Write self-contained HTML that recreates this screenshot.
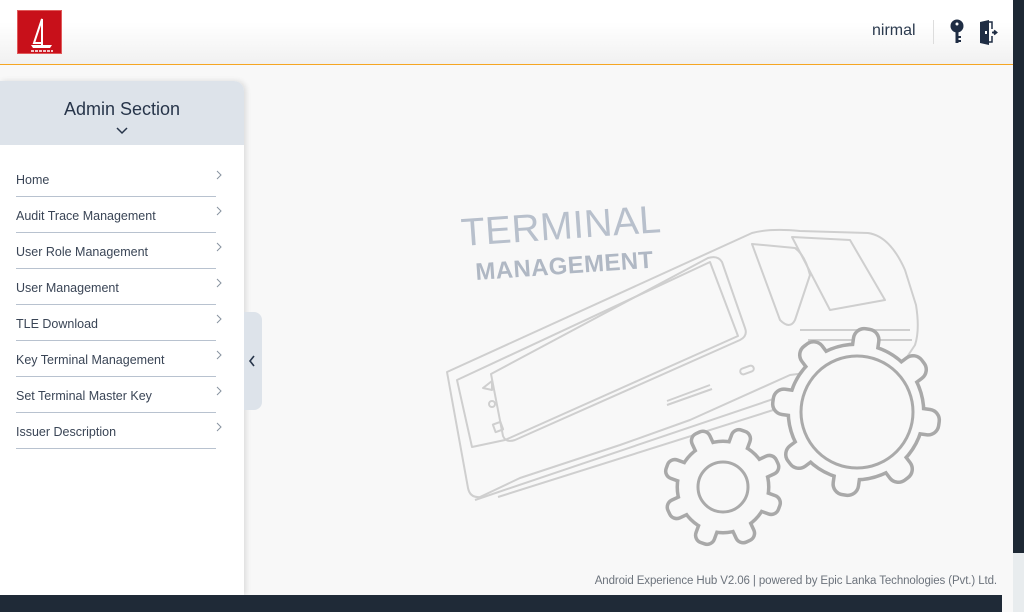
<!DOCTYPE html>
<html><head><meta charset="utf-8"><style>
*{margin:0;padding:0;box-sizing:border-box}
body{width:1024px;height:612px;overflow:hidden;background:#f8f8f8;font-family:"Liberation Sans",sans-serif;position:relative}
.hdr{position:absolute;left:0;top:0;width:1013px;height:65px;background:linear-gradient(#fff 0%,#fff 35%,#f1f1f1 100%);border-bottom:1px solid #f5a623}
.logo{position:absolute;left:17px;top:10px;width:45px;height:44px;background:#c8101a;border:1px solid #e05a5a}
.user{position:absolute;left:872px;top:22px;font-size:16px;color:#2b3a4e}
.sep{position:absolute;left:933px;top:20px;width:1px;height:24px;background:#ddd}
.rstrip{position:absolute;left:1013px;top:0;width:11px;height:553px;background:#1d2834}
.rstrip2{position:absolute;left:1013px;top:553px;width:11px;height:59px;background:#e8ecee}
.foot{position:absolute;left:0;top:595px;width:1002px;height:17px;background:#1f2a37}
.side{position:absolute;left:0;top:81px;width:244px;height:514px;background:#fff;box-shadow:2px 0 6px rgba(0,0,0,.12);border-top-right-radius:10px}
.sh{height:64px;background:#dde3ea;border-top-right-radius:10px;text-align:center;color:#27354a;font-size:18px;padding-top:18px}
.item{position:absolute;left:16px;width:200px;height:36px;border-bottom:1px solid #b8c2cf;font-size:12.5px;color:#3a4556}
.item span{position:absolute;left:0;bottom:9px}
.item i{position:absolute;right:-6px;bottom:13px}
.tab{position:absolute;left:244px;top:312px;width:18px;height:98px;background:#dde3ea;border-radius:0 8px 8px 0}
.ft{position:absolute;right:27px;top:575px;font-size:11.5px;color:#6c737c;letter-spacing:-0.1px}
</style></head><body>
<div class="hdr">
 <div class="logo"><svg width="45" height="44" viewBox="0 0 45 44"><path d="M24 8 L16 32 L24 32 Z" fill="none" stroke="#fff" stroke-width="2"/><path d="M24 8 V34" stroke="#fff" stroke-width="2"/><path d="M13 34 H34 L32 37 H15 Z" fill="#fff"/><path d="M13 40 h22" stroke="#fff" stroke-width="1.5" stroke-dasharray="3 1"/></svg></div>
 <div class="user">nirmal</div><div class="sep"></div>
 <svg style="position:absolute;left:948px;top:19px" width="18" height="26" viewBox="0 0 18 26"><circle cx="9" cy="7" r="6.5" fill="#1f2d44"/><circle cx="9" cy="5" r="1.5" fill="#fff"/><rect x="7.5" y="11" width="3" height="13" fill="#1f2d44"/><rect x="10" y="17" width="3" height="2" fill="#1f2d44"/><rect x="10" y="21" width="3" height="2" fill="#1f2d44"/></svg>
 <svg style="position:absolute;left:979px;top:20px" width="20" height="25" viewBox="0 0 20 25"><path d="M1 2 L10 0 V25 L1 23 Z" fill="#1f2d44"/><path d="M10 2 H13 V9 M13 16 V22 H10" fill="none" stroke="#1f2d44" stroke-width="1.5"/><rect x="6" y="11" width="2" height="3" fill="#fff"/><path d="M13 12.5 H17 M15 10.5 L17.5 12.5 L15 14.5" stroke="#1f2d44" stroke-width="1.8" fill="none"/></svg>
</div>
<div class="rstrip"></div><div class="rstrip2"></div>
<div class="side">
 <div class="sh">Admin Section<br><svg width="14" height="10" viewBox="0 0 14 10" style="margin-top:4px"><path d="M2 2 L7 7 L12 2" fill="none" stroke="#27354a" stroke-width="1.5"/></svg></div>
 <div class="item" style="top:80px"><span>Home</span><i><svg width="6" height="10"><path d="M1 1 L5 5 L1 9" fill="none" stroke="#8893a0"/></svg></i></div>
 <div class="item" style="top:116px"><span>Audit Trace Management</span><i><svg width="6" height="10"><path d="M1 1 L5 5 L1 9" fill="none" stroke="#8893a0"/></svg></i></div>
 <div class="item" style="top:152px"><span>User Role Management</span><i><svg width="6" height="10"><path d="M1 1 L5 5 L1 9" fill="none" stroke="#8893a0"/></svg></i></div>
 <div class="item" style="top:188px"><span>User Management</span><i><svg width="6" height="10"><path d="M1 1 L5 5 L1 9" fill="none" stroke="#8893a0"/></svg></i></div>
 <div class="item" style="top:224px"><span>TLE Download</span><i><svg width="6" height="10"><path d="M1 1 L5 5 L1 9" fill="none" stroke="#8893a0"/></svg></i></div>
 <div class="item" style="top:260px"><span>Key Terminal Management</span><i><svg width="6" height="10"><path d="M1 1 L5 5 L1 9" fill="none" stroke="#8893a0"/></svg></i></div>
 <div class="item" style="top:296px"><span>Set Terminal Master Key</span><i><svg width="6" height="10"><path d="M1 1 L5 5 L1 9" fill="none" stroke="#8893a0"/></svg></i></div>
 <div class="item" style="top:332px"><span>Issuer Description</span><i><svg width="6" height="10"><path d="M1 1 L5 5 L1 9" fill="none" stroke="#8893a0"/></svg></i></div>
</div>
<div class="tab"><svg width="18" height="98"><path d="M10 44 L6 49 L10 54" fill="none" stroke="#27354a" stroke-width="1.6"/></svg></div>
<svg style="position:absolute;left:0;top:0" width="1024" height="612" viewBox="0 0 1024 612">
 <g fill="none" stroke="#cfcfcf" stroke-width="2" stroke-linejoin="round">
  <path d="M447 372 L752 233 Q770 228 800 231 L868 233 Q890 236 905 270 L916 305 Q920 330 915 345 L905 360 L790 375 L690 420 L620 445 L520 478 L480 497 Q470 498 468 488 Z"/>
  <path d="M457 380 L710 262 L738 336 L505 440 L472 447 Z"/>
  <path d="M491 374 L708 258 Q718 255 722 262 L745 328 Q748 336 740 340 L515 440 Q506 443 503 436 Z"/>
  <path d="M752 244 L795 248 Q805 255 810 275 L795 320 Q790 330 780 320 Z"/>
  <path d="M792 237 L850 240 L885 300 L830 310 Z"/>
  <path d="M475 500 L800 390 M498 497 L805 400"/>
  <path d="M667 401 L710 385 M667 405 L712 389"/>
  <rect x="740" y="367" width="14" height="6" rx="3" transform="rotate(-20 747 370)"/>
  <path d="M483 388 L492 381 L492 390 Z"/><circle cx="492" cy="404" r="3"/><rect x="494" y="423" width="8" height="8" transform="rotate(-20 498 427)"/>
  <path d="M800 330 L910 330 M808 340 L912 340"/>
 </g>
 <g stroke="#a9a9a9" stroke-width="7" fill="#a9a9a9" stroke-linejoin="round">
  <g><circle cx="856" cy="412" r="66"/>
   <g transform="translate(856 412) rotate(8)"><rect x="-11" y="-82" width="22" height="28" rx="9"/><rect x="-11" y="-82" width="22" height="28" rx="9" transform="rotate(45)"/><rect x="-11" y="-82" width="22" height="28" rx="9" transform="rotate(90)"/><rect x="-11" y="-82" width="22" height="28" rx="9" transform="rotate(135)"/><rect x="-11" y="-82" width="22" height="28" rx="9" transform="rotate(180)"/><rect x="-11" y="-82" width="22" height="28" rx="9" transform="rotate(225)"/><rect x="-11" y="-82" width="22" height="28" rx="9" transform="rotate(270)"/><rect x="-11" y="-82" width="22" height="28" rx="9" transform="rotate(315)"/></g></g>
  <g><circle cx="723" cy="487" r="44"/>
   <g transform="translate(723 487) rotate(20)"><rect x="-8" y="-58" width="16" height="22" rx="6"/><rect x="-8" y="-58" width="16" height="22" rx="6" transform="rotate(45)"/><rect x="-8" y="-58" width="16" height="22" rx="6" transform="rotate(90)"/><rect x="-8" y="-58" width="16" height="22" rx="6" transform="rotate(135)"/><rect x="-8" y="-58" width="16" height="22" rx="6" transform="rotate(180)"/><rect x="-8" y="-58" width="16" height="22" rx="6" transform="rotate(225)"/><rect x="-8" y="-58" width="16" height="22" rx="6" transform="rotate(270)"/><rect x="-8" y="-58" width="16" height="22" rx="6" transform="rotate(315)"/></g></g>
 </g>
 <g fill="#f8f8f8">
  <circle cx="856" cy="412" r="66"/>
  <g transform="translate(856 412) rotate(8)"><rect x="-11" y="-82" width="22" height="28" rx="9"/><rect x="-11" y="-82" width="22" height="28" rx="9" transform="rotate(45)"/><rect x="-11" y="-82" width="22" height="28" rx="9" transform="rotate(90)"/><rect x="-11" y="-82" width="22" height="28" rx="9" transform="rotate(135)"/><rect x="-11" y="-82" width="22" height="28" rx="9" transform="rotate(180)"/><rect x="-11" y="-82" width="22" height="28" rx="9" transform="rotate(225)"/><rect x="-11" y="-82" width="22" height="28" rx="9" transform="rotate(270)"/><rect x="-11" y="-82" width="22" height="28" rx="9" transform="rotate(315)"/></g>
  <circle cx="723" cy="487" r="44"/>
  <g transform="translate(723 487) rotate(20)"><rect x="-8" y="-58" width="16" height="22" rx="6"/><rect x="-8" y="-58" width="16" height="22" rx="6" transform="rotate(45)"/><rect x="-8" y="-58" width="16" height="22" rx="6" transform="rotate(90)"/><rect x="-8" y="-58" width="16" height="22" rx="6" transform="rotate(135)"/><rect x="-8" y="-58" width="16" height="22" rx="6" transform="rotate(180)"/><rect x="-8" y="-58" width="16" height="22" rx="6" transform="rotate(225)"/><rect x="-8" y="-58" width="16" height="22" rx="6" transform="rotate(270)"/><rect x="-8" y="-58" width="16" height="22" rx="6" transform="rotate(315)"/></g>
 </g>
 <circle cx="857" cy="412" r="56" fill="none" stroke="#aaa" stroke-width="3"/>
 <circle cx="723" cy="487" r="25" fill="none" stroke="#aaa" stroke-width="3"/>
 <text x="462" y="246" transform="rotate(-4 462 246)" font-family="Liberation Sans,sans-serif" font-size="39" fill="#b8c0cc" textLength="200">TERMINAL</text>
 <text x="476" y="280" transform="rotate(-4 476 280)" font-family="Liberation Sans,sans-serif" font-size="24" font-weight="bold" fill="#b0b8c4" textLength="178">MANAGEMENT</text>
</svg>
<div class="ft">Android Experience Hub V2.06 | powered by Epic Lanka Technologies (Pvt.) Ltd.</div>
<div class="foot"></div>
</body></html>
